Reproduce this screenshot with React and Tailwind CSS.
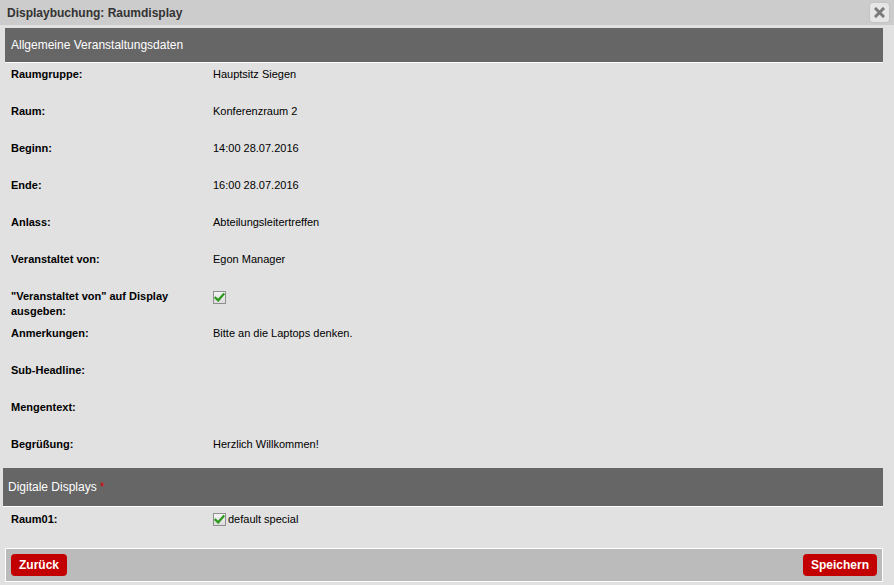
import React from "react";

function Check() {
  return (
    <span className="inline-flex items-center justify-center w-[13px] h-[13px] border border-[#8f8f8f] bg-gradient-to-b from-[#f4f4f4] to-[#dcdcdc] align-middle">
      <svg width="11" height="11" viewBox="0 0 11 11">
        <path d="M1.5 5.8 L4.2 8.3 L9.5 2.2" stroke="#2a9a1a" strokeWidth="2.2" fill="none" strokeLinecap="square" />
      </svg>
    </span>
  );
}

function Row({ label, children, pt = "pt-[4px]" }) {
  return (
    <div className={"flex h-[37px] leading-[15px] text-[11px] text-black " + pt}>
      <div className="w-[208px] pl-[6px] pr-2 font-bold">{label}</div>
      <div className="flex-1">{children}</div>
    </div>
  );
}

export default function App() {
  const rows = [
    ["Raumgruppe:", "Hauptsitz Siegen"],
    ["Raum:", "Konferenzraum 2"],
    ["Beginn:", "14:00 28.07.2016"],
    ["Ende:", "16:00 28.07.2016"],
    ["Anlass:", "Abteilungsleitertreffen"],
    ["Veranstaltet von:", "Egon Manager"],
  ];
  const rows2 = [
    ["Anmerkungen:", "Bitte an die Laptops denken."],
    ["Sub-Headline:", ""],
    ["Mengentext:", ""],
    ["Begrüßung:", "Herzlich Willkommen!"],
  ];
  return (
    <div className="w-[894px] h-[585px] bg-[#e1e1e1] overflow-hidden" style={{ fontFamily: '"Liberation Sans", Arial, sans-serif' }}>
      <div className="h-[25px] bg-[#cccccc] flex items-center justify-between pl-[7px] pr-[5px]">
        <span className="text-[12px] font-bold text-[#333]">Displaybuchung: Raumdisplay</span>
        <span className="w-[19px] h-[19px] rounded-[3px] bg-[#e6e6e6] shadow-[0_0_2px_rgba(0,0,0,0.15)] flex items-center justify-center mt-[-1px]">
          <svg width="11" height="11" viewBox="0 0 11 11">
            <path d="M2 2 L9 9 M9 2 L2 9" stroke="#7a7a7a" strokeWidth="3" strokeLinecap="square" />
          </svg>
        </span>
      </div>
      <div className="pt-[3px] pr-[11px]">
        <div className="ml-[5px] h-[34px] bg-[#666666] border-b border-white flex items-center pl-[6px] text-[12px] text-white box-content">
          Allgemeine Veranstaltungsdaten
        </div>
        <div className="ml-[5px]">
          {rows.map(([l, v]) => (
            <Row key={l} label={l}>{v}</Row>
          ))}
          <Row label={<>"Veranstaltet von" auf Display<br />ausgeben:</>}>
            <span className="inline-block mt-[-2px]"><Check /></span>
          </Row>
          {rows2.map(([l, v]) => (
            <Row key={l} label={l}>{v}</Row>
          ))}
        </div>
        <div className="ml-[3px] mt-[-2px] h-[38px] bg-[#666666] border-b border-white flex items-center pl-[5px] text-[12px] text-white box-content">
          Digitale Displays<span className="text-[#dd0000] ml-[3px]">*</span>
        </div>
        <div className="ml-[5px]">
          <Row label="Raum01:" pt="pt-[5px]">
            <span className="inline-flex items-center gap-[2px]"><Check /><span>default special</span></span>
          </Row>
        </div>
        <div className="ml-[5px] mt-[4px] h-[34px] border border-white bg-[#bbbbbb] flex items-center justify-between px-[5px]">
          <button className="h-[22px] w-[56px] rounded-[4px] bg-[#c30000] text-white font-bold text-[12px] leading-none">Zurück</button>
          <button className="h-[22px] px-[8px] rounded-[4px] bg-[#c30000] text-white font-bold text-[12px] leading-none">Speichern</button>
        </div>
      </div>
    </div>
  );
}
